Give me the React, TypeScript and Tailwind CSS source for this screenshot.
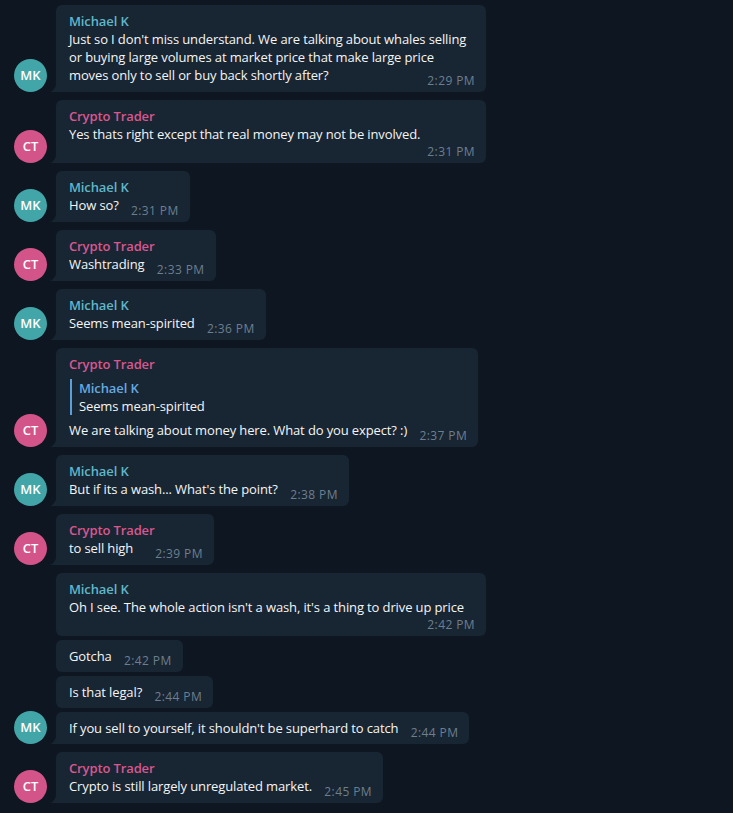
import React from 'react';

type Author = 'mk' | 'ct';

interface Msg {
  text: string;
  time: string;
  showName?: boolean;
  timeBelow?: boolean;
  reply?: { name: string; text: string };
}

interface Group {
  author: Author;
  messages: Msg[];
}

const people = {
  mk: { name: 'Michael K', initials: 'MK', nameColor: 'text-[#5fb7c9]', avatar: 'bg-[#42a5a8]' },
  ct: { name: 'Crypto Trader', initials: 'CT', nameColor: 'text-[#d8578f]', avatar: 'bg-[#d35489]' },
};

const groups: Group[] = [
  {
    author: 'mk',
    messages: [
      {
        showName: true,
        text: "Just so I don't miss understand. We are talking about whales selling or buying large volumes at market price that make large price moves only to sell or buy back shortly after?",
        time: '2:29 PM',
      },
    ],
  },
  {
    author: 'ct',
    messages: [
      {
        showName: true,
        text: 'Yes thats right except that real money may not be involved.',
        time: '2:31 PM',
        timeBelow: true,
      },
    ],
  },
  { author: 'mk', messages: [{ showName: true, text: 'How so?', time: '2:31 PM' }] },
  { author: 'ct', messages: [{ showName: true, text: 'Washtrading', time: '2:33 PM' }] },
  { author: 'mk', messages: [{ showName: true, text: 'Seems mean-spirited', time: '2:36 PM' }] },
  {
    author: 'ct',
    messages: [
      {
        showName: true,
        reply: { name: 'Michael K', text: 'Seems mean-spirited' },
        text: 'We are talking about money here. What do you expect? :)',
        time: '2:37 PM',
      },
    ],
  },
  { author: 'mk', messages: [{ showName: true, text: "But if its a wash... What's the point?", time: '2:38 PM' }] },
  // trailing spaces in the original message
  { author: 'ct', messages: [{ showName: true, text: 'to sell high\u00a0\u00a0\u00a0', time: '2:39 PM' }] },
  {
    author: 'mk',
    messages: [
      {
        showName: true,
        text: "Oh I see. The whole action isn't a wash, it's a thing to drive up price",
        time: '2:42 PM',
        timeBelow: true,
      },
      { text: 'Gotcha', time: '2:42 PM' },
      { text: 'Is that legal?', time: '2:44 PM' },
      { text: "If you sell to yourself, it shouldn't be superhard to catch", time: '2:44 PM' },
    ],
  },
  { author: 'ct', messages: [{ showName: true, text: 'Crypto is still largely unregulated market.', time: '2:45 PM' }] },
];

function Tail() {
  return (
    <svg className="absolute left-[-6px] bottom-0" width="7" height="12" viewBox="0 0 7 12">
      <path d="M0 12 Q6 10 7 0 L7 12 Z" fill="#182533" />
    </svg>
  );
}

const timeCls = 'text-[12px] leading-[14px] tracking-[0.4px] text-[#6d7f8f]';

function Bubble({ msg, author, last }: { msg: Msg; author: Author; last: boolean }) {
  const p = people[author];
  return (
    <div
      className={`relative bg-[#182533] pl-[13px] pr-[11px] pt-[7px] max-w-[430px] text-[13px] leading-[18px] tracking-[-0.12px] text-[#f5f5f5] ${
        msg.showName ? 'pb-[8px]' : 'pb-[7px]'
      } ${last ? 'rounded-[6px] rounded-bl-none' : 'rounded-[6px]'} ${msg.timeBelow ? 'w-[430px]' : ''}`}
    >
      {last && <Tail />}
      {msg.showName && <div className={`font-semibold ${p.nameColor}`}>{p.name}</div>}
      {msg.reply && (
        <div className="mt-[6px] mb-[6px] ml-[1px] border-l-2 border-[#5a9fd8] pl-[7px]">
          <div className="font-semibold text-[#66a9e0]">{msg.reply.name}</div>
          <div>{msg.reply.text}</div>
        </div>
      )}
      {msg.timeBelow ? (
        <>
          <div>{msg.text}</div>
          <div className={`text-right mt-[2px] -mb-[4px] ${timeCls}`}>{msg.time}</div>
        </>
      ) : (
        <div>
          {msg.text}
          <span className="inline-block w-[60px]" />
          <span className={`absolute right-[11px] bottom-[4px] ${timeCls}`}>{msg.time}</span>
        </div>
      )}
    </div>
  );
}

export default function App() {
  return (
    <div
      className="w-[733px] h-[813px] overflow-hidden bg-[#0e1621] pt-[5px] flex flex-col gap-2"
      style={{ fontFamily: '"Open Sans", "Noto Sans", sans-serif' }}
    >
      {groups.map((g, gi) => {
        const p = people[g.author];
        return (
          <div key={gi} className="flex items-end pl-[14px]">
            <div
              className={`w-[33px] h-[33px] shrink-0 rounded-full ${p.avatar} flex items-center justify-center text-white text-[13px] font-semibold`}
            >
              {p.initials}
            </div>
            <div className="ml-[9px] flex flex-col items-start gap-1">
              {g.messages.map((m, mi) => (
                <Bubble key={mi} msg={m} author={g.author} last={mi === g.messages.length - 1} />
              ))}
            </div>
          </div>
        );
      })}
    </div>
  );
}
